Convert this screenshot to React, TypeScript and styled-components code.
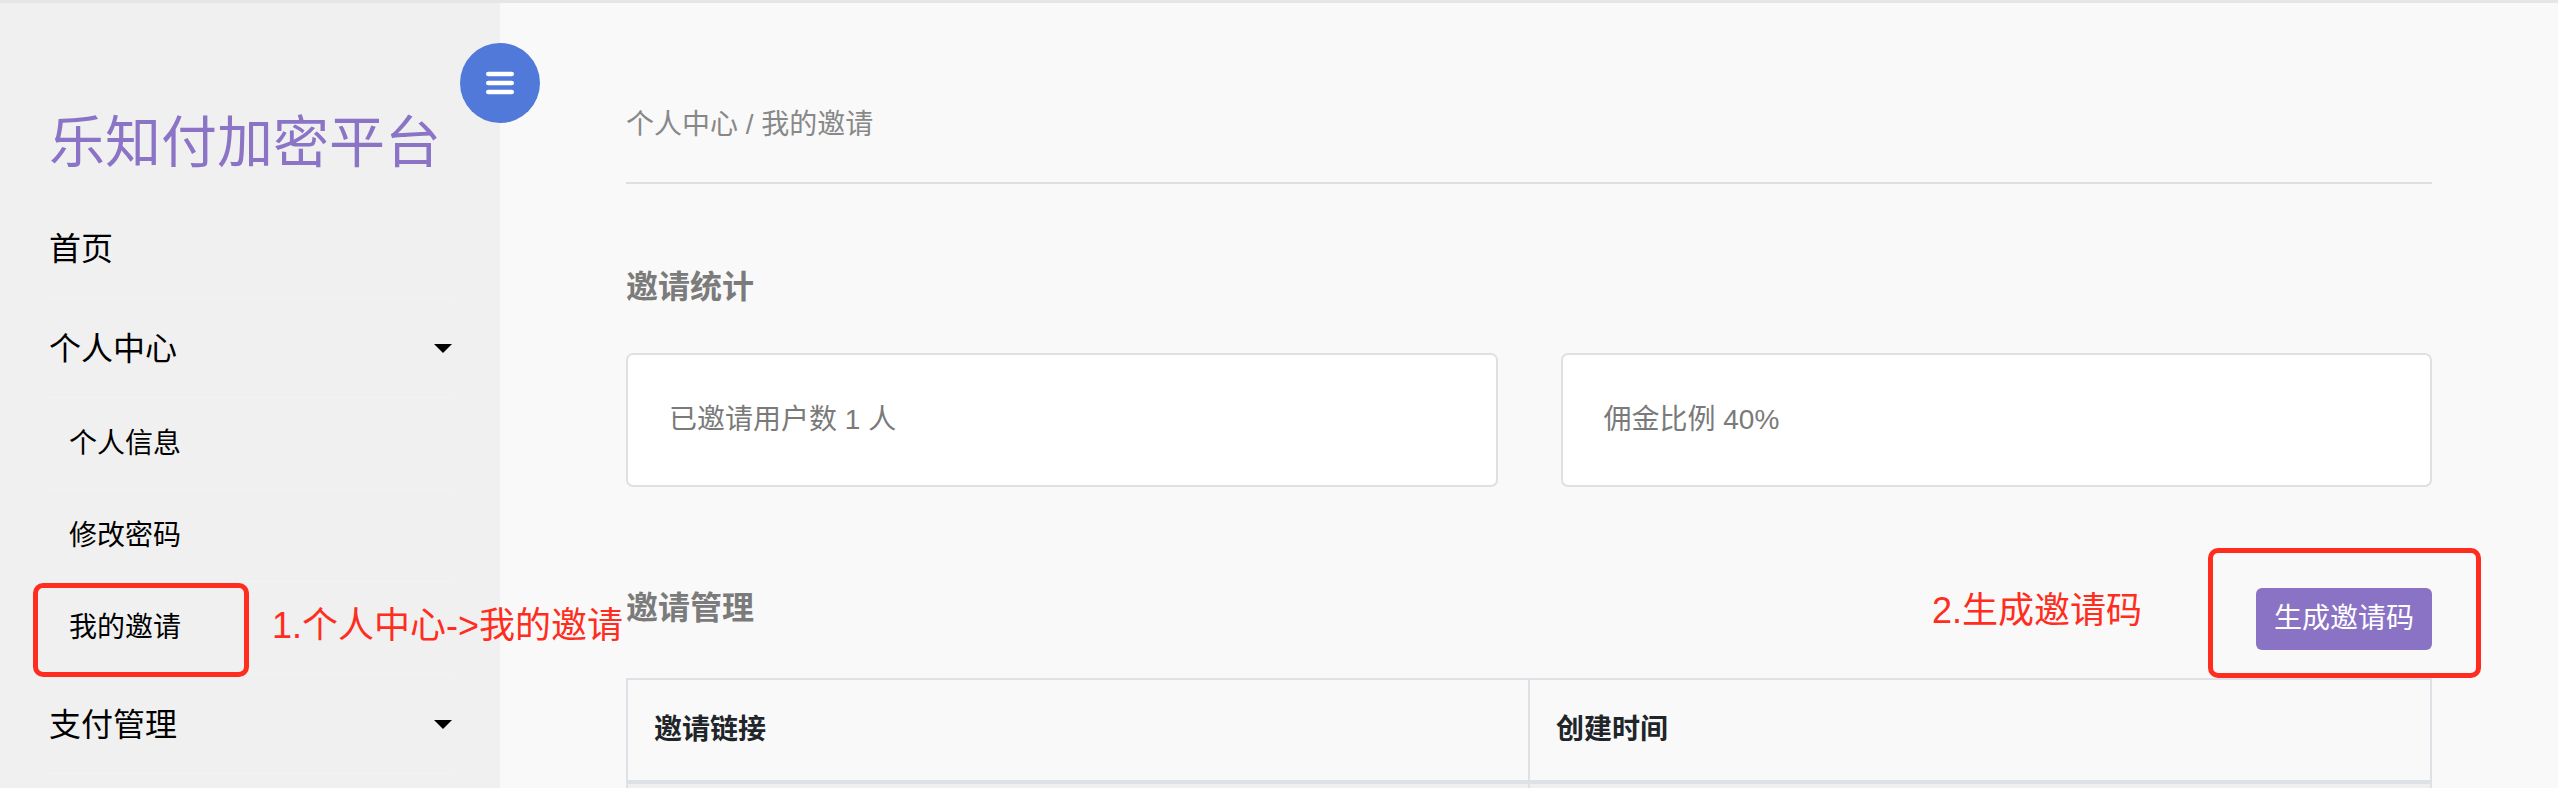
import React from "react";
import styled, { createGlobalStyle } from "styled-components";

const Global = createGlobalStyle`
  html, body {
    margin: 0;
    padding: 0;
    overflow: hidden;
    background: #f9f9f9;
  }
  body {
    font-family: "Liberation Sans", "Noto Sans CJK SC", "Noto Sans", sans-serif;
  }
  * { box-sizing: border-box; }
`;

const Frame = styled.div`
  display: flex;
  height: 788px;
  border-top: 3px solid #e6e6e6;
  overflow: hidden;
`;

const Sidebar = styled.aside`
  position: relative;
  flex: 0 0 500px;
  width: 500px;
  background: #f0f0f0;
  padding: 0 48px;
  z-index: 2;
`;

const MenuToggle = styled.button`
  position: absolute;
  top: 40px;
  right: -40px;
  width: 80px;
  height: 80px;
  border-radius: 50%;
  border: none;
  padding: 0;
  background: #5079d9;
  display: flex;
  align-items: center;
  justify-content: center;
  cursor: pointer;
`;

const Brand = styled.h1`
  margin: 100px 0 15px 1px;
  font-size: 56px;
  line-height: 80px;
  font-weight: 400;
  color: #8b73c6;
  white-space: nowrap;
`;

const Nav = styled.nav`
  display: flex;
  flex-direction: column;
`;

const NavItem = styled.div<{ $sub?: boolean }>`
  position: relative;
  display: flex;
  align-items: center;
  justify-content: space-between;
  height: ${(p) => (p.$sub ? "92px" : "100px")};
  padding: ${(p) => (p.$sub ? "1px 0 0 21px" : "3px 0 0 1px")};
  font-size: ${(p) => (p.$sub ? "28px" : "32px")};
  line-height: 40px;
  color: #000;
  border-bottom: 1px solid #f3f3f3;
  white-space: nowrap;
`;

const Caret = styled.span`
  width: 0;
  height: 0;
  border-left: 9px solid transparent;
  border-right: 9px solid transparent;
  border-top: 9px solid #000;
  margin-top: -1px;
`;

const HighlightBox = styled.span<{ $left: number; $top: number; $w: number; $h: number }>`
  position: absolute;
  left: ${(p) => p.$left}px;
  top: ${(p) => p.$top}px;
  width: ${(p) => p.$w}px;
  height: ${(p) => p.$h}px;
  border: 5px solid #ff2d20;
  border-radius: 10px;
  pointer-events: none;
`;

const Callout = styled.span`
  position: absolute;
  font-size: 36px;
  line-height: 44px;
  color: #ff2d20;
  white-space: nowrap;
  z-index: 3;
`;

const SidebarCallout = styled(Callout)`
  left: 224px;
  top: 22px;
`;

const Main = styled.main`
  flex: 1;
  min-width: 0;
  padding: 0 126px;
  background: #f9f9f9;
`;

const Breadcrumb = styled.div`
  padding: 102px 0 37px;
  font-size: 28px;
  line-height: 40px;
  color: #888;
  border-bottom: 2px solid #dfdfdf;
`;

const SectionTitle = styled.h2<{ $mt?: number }>`
  margin: ${(p) => p.$mt ?? 0}px 0 0;
  font-size: 32px;
  line-height: 40px;
  font-weight: 700;
  color: #7b7b7b;
`;

const StatGrid = styled.div`
  display: grid;
  grid-template-columns: 1fr 1fr;
  gap: 63px;
  margin-top: 46px;
`;

const StatCard = styled.div`
  display: flex;
  align-items: center;
  height: 134px;
  padding: 0 41px;
  background: #fff;
  border: 2px solid #e0e0e0;
  border-radius: 7px;
  font-size: 28px;
  line-height: 40px;
  color: #7a7a7a;
`;

const SectionHeader = styled.div`
  display: flex;
  justify-content: space-between;
  align-items: flex-start;
  margin: 101px 0 28px;
`;

const ActionWrap = styled.div`
  position: relative;
`;

const ActionCallout = styled(Callout)`
  right: calc(100% + 114px);
  top: 1px;
`;

const PrimaryButton = styled.button`
  display: block;
  height: 62px;
  padding: 0 18px;
  border: none;
  border-radius: 6px;
  background: #8a72c5;
  color: #fff;
  font-family: inherit;
  font-size: 28px;
  line-height: 40px;
  cursor: pointer;
`;

const Table = styled.table`
  width: 100%;
  border-collapse: collapse;
  table-layout: fixed;
  border: 2px solid #dee2e6;
`;

const Th = styled.th`
  height: 103px;
  padding: 0 26px;
  text-align: left;
  font-size: 28px;
  line-height: 40px;
  font-weight: 700;
  color: #212529;
  background: #f9f9f9;
  border: 2px solid #dee2e6;
  border-bottom-width: 4px;
`;

const Td = styled.td`
  height: 90px;
  padding: 0 26px;
  background: #efeff0;
  border: 2px solid #dee2e6;
`;

const MenuIcon = () => (
  <svg width="30" height="26" viewBox="0 0 30 26" aria-hidden="true">
    <g stroke="#fff" strokeWidth="4.6" strokeLinecap="round">
      <line x1="3.3" y1="4" x2="26.7" y2="4" />
      <line x1="3.3" y1="13" x2="26.7" y2="13" />
      <line x1="3.3" y1="22" x2="26.7" y2="22" />
    </g>
  </svg>
);

export default function App() {
  return (
    <>
      <Global />
      <Frame>
        <Sidebar>
          <MenuToggle aria-label="menu">
            <MenuIcon />
          </MenuToggle>
          <Brand>乐知付加密平台</Brand>
          <Nav>
            <NavItem>首页</NavItem>
            <NavItem>
              个人中心
              <Caret />
            </NavItem>
            <NavItem $sub>个人信息</NavItem>
            <NavItem $sub>修改密码</NavItem>
            <NavItem $sub>
              我的邀请
              <HighlightBox $left={-15} $top={1} $w={216} $h={94} />
              <SidebarCallout>1.个人中心-&gt;我的邀请</SidebarCallout>
            </NavItem>
            <NavItem>
              支付管理
              <Caret />
            </NavItem>
          </Nav>
        </Sidebar>
        <Main>
          <Breadcrumb>个人中心 / 我的邀请</Breadcrumb>
          <SectionTitle $mt={83}>邀请统计</SectionTitle>
          <StatGrid>
            <StatCard>已邀请用户数 1 人</StatCard>
            <StatCard>佣金比例 40%</StatCard>
          </StatGrid>
          <SectionHeader>
            <SectionTitle>邀请管理</SectionTitle>
            <ActionWrap>
              <ActionCallout>2.生成邀请码</ActionCallout>
              <HighlightBox $left={-48} $top={-40} $w={273} $h={130} />
              <PrimaryButton>生成邀请码</PrimaryButton>
            </ActionWrap>
          </SectionHeader>
          <Table>
            <thead>
              <tr>
                <Th>邀请链接</Th>
                <Th>创建时间</Th>
              </tr>
            </thead>
            <tbody>
              <tr>
                <Td />
                <Td />
              </tr>
            </tbody>
          </Table>
        </Main>
      </Frame>
    </>
  );
}
